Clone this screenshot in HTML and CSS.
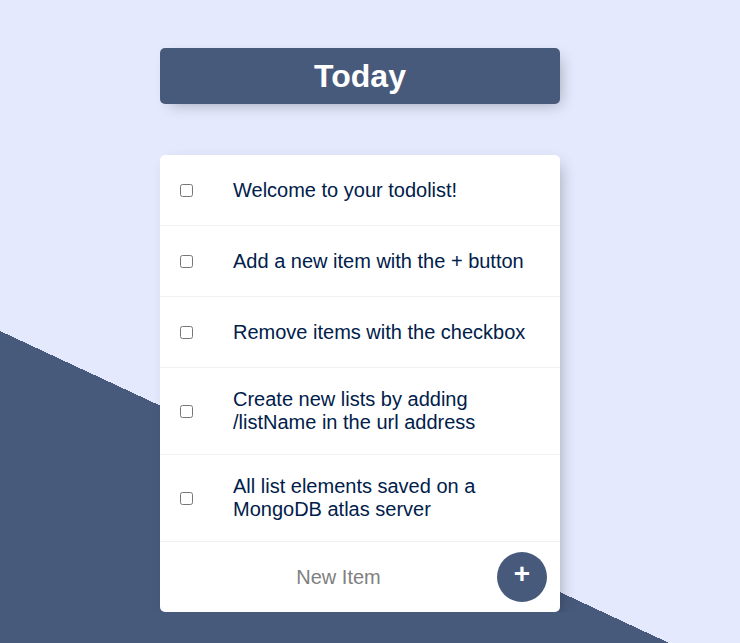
FILE: index.html
```html
<!DOCTYPE html>
<html lang="en">
<head>
<meta charset="utf-8">
<title>To Do List</title>
<link rel="stylesheet" href="styles.css">
</head>
<body>
<main class="page">
  <div class="box heading">
    <h1 class="title">Today</h1>
  </div>
  <div class="box list">
    <div class="item">
      <input class="check" type="checkbox">
      <p class="text">Welcome to your todolist!</p>
    </div>
    <div class="item">
      <input class="check" type="checkbox">
      <p class="text">Add a new item with the + button</p>
    </div>
    <div class="item">
      <input class="check" type="checkbox">
      <p class="text">Remove items with the checkbox</p>
    </div>
    <div class="item">
      <input class="check" type="checkbox">
      <p class="text">Create new lists by adding /listName in the url address</p>
    </div>
    <div class="item">
      <input class="check" type="checkbox">
      <p class="text">All list elements saved on a MongoDB atlas server</p>
    </div>
    <form class="item new-form">
      <input class="new-input" type="text" name="newItem" placeholder="New Item" autocomplete="off">
      <button class="add-btn" type="submit">+</button>
    </form>
  </div>
</main>
</body>
</html>
```
FILE: styles.css
```css
html {
  background-color: #E4E9FD;
  background-image: linear-gradient(25deg, #485A7C 50%, #E4E9FD 50%);
  background-size: 100% 1007px;
  background-repeat: no-repeat;
  min-height: 100%;
  font-family: "Liberation Sans", Arial, sans-serif;
}

body {
  margin: 0;
}

.page {
  padding-top: 48px;
  padding-right: 20px;
  display: flex;
  flex-direction: column;
  align-items: center;
  gap: 51px;
}

.box {
  width: 400px;
  background: #fff;
  border-radius: 5px;
  box-shadow: 5px 5px 15px -5px rgba(0, 0, 0, 0.3);
}

.heading {
  background-color: #485A7C;
  text-align: center;
}

.title {
  margin: 0;
  padding: 10px;
  font-size: 32px;
  line-height: 36px;
  font-weight: bold;
  color: #fff;
}

.item {
  min-height: 70px;
  display: flex;
  align-items: center;
  border-bottom: 1px solid #F1F1F1;
}

.item:last-child {
  border-bottom: 0;
}

.check {
  margin: 20px;
  width: 13px;
  height: 13px;
  flex-shrink: 0;
}

.text {
  margin: 0;
  padding: 20px;
  font-size: 20px;
  line-height: 23px;
  color: #00204a;
}

.new-form {
  margin: 0 0 0 20px;
}

.new-input {
  box-sizing: content-box;
  width: 313px;
  height: 60px;
  padding: 1px 2px;
  border: none;
  background: transparent;
  text-align: center;
  font-family: "Liberation Sans", Arial, sans-serif;
  font-size: 20px;
  color: #00204a;
}

.new-input:focus {
  outline: none;
  box-shadow: inset 0 -3px 0 0 #485A7C;
}

.new-input::placeholder {
  color: grey;
  opacity: 1;
}

.add-btn {
  box-sizing: border-box;
  width: 50px;
  height: 50px;
  border: 0;
  border-radius: 50%;
  padding: 0 0 6px 0;
  background-color: #485A7C;
  color: #fff;
  font-family: "Liberation Sans", Arial, sans-serif;
  font-size: 28px;
  font-weight: bold;
  line-height: 34px;
  cursor: pointer;
}
```
